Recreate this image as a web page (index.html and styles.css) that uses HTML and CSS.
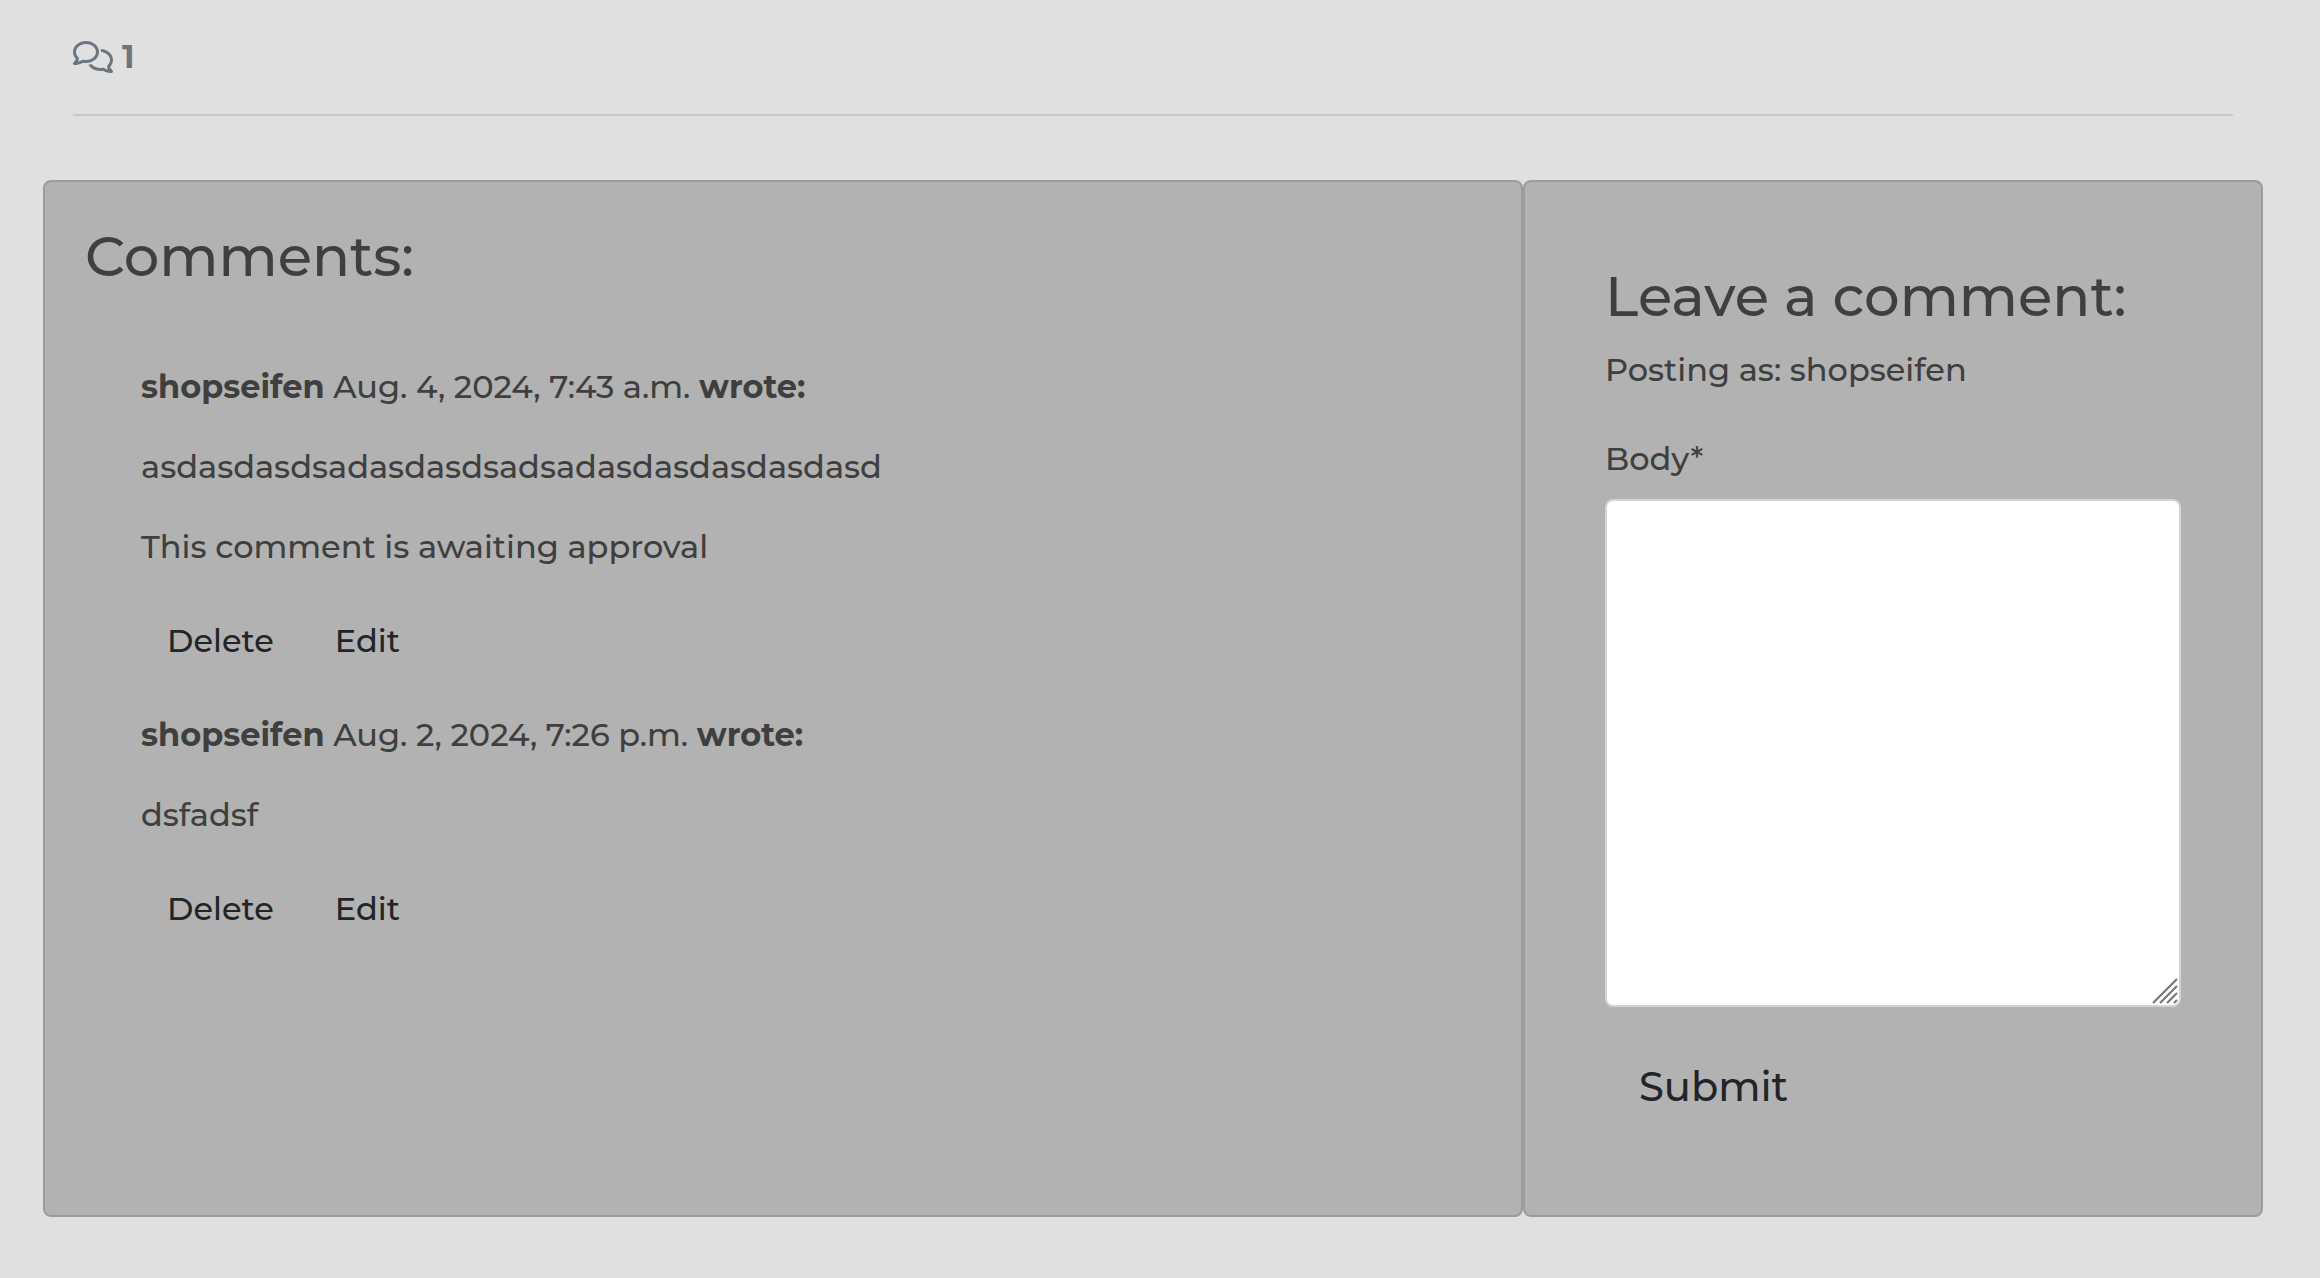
FILE: index.html
```html
<!DOCTYPE html>
<html lang="en">
<head>
  <meta charset="utf-8">
  <meta name="viewport" content="width=device-width, initial-scale=1">
  <title>Comments</title>
  <link rel="stylesheet" href="styles.css">
</head>
<body>
  <main class="page">
    <div class="comment-count">
      <svg class="count-icon" viewBox="0 0 640 512" fill="currentColor" aria-hidden="true"><path d="M88.200 309.100c9.800-18.300 6.800-40.800-7.500-55.800C59.400 230.900 48 204 48 176c0-63.500 63.800-128 160-128s160 64.500 160 128s-63.800 128-160 128c-13.100 0-25.800-1.300-37.800-3.600c-10.400-2-21.200-.6-30.700 4.200c-4.100 2.100-8.300 4.100-12.600 6c-16 7.200-32.900 13.500-49.900 18c2.800-4.600 5.400-9.100 7.900-13.600c1.100-1.900 2.200-3.900 3.200-5.900zM208 352c114.900 0 208-78.800 208-176S322.900 0 208 0S0 78.800 0 176c0 41.800 17.200 80.100 45.900 110.300c-.9 1.700-1.900 3.500-2.800 5.100c-10.300 18.400-22.300 36.500-36.600 52.100c-6.600 7-8.300 17.200-4.600 25.900C5.800 378.300 14.400 384 24 384c43 0 86.500-13.300 122.700-29.700c4.800-2.200 9.600-4.500 14.200-6.800c15.100 3 30.900 4.500 47.100 4.500zM432 480c16.200 0 31.900-1.600 47.100-4.500c4.600 2.300 9.400 4.600 14.200 6.800C529.500 498.700 573 512 616 512c9.600 0 18.200-5.700 22-14.500c3.800-8.800 2-19-4.600-25.900c-14.200-15.600-26.200-33.700-36.600-52.100c-.9-1.700-1.900-3.400-2.800-5.100C622.800 384.100 640 345.800 640 304c0-94.400-87.900-171.500-198.200-175.800c4.100 15.200 6.200 31.200 6.200 47.800l0 .6c87.200 6.700 144 67.500 144 127.400c0 28-11.400 54.900-32.700 77.200c-14.300 15-17.300 37.600-7.500 55.800c1.100 2 2.200 4 3.200 5.900c2.500 4.500 5.200 9 7.900 13.600c-17-4.500-33.900-10.700-49.900-18c-4.300-1.900-8.500-3.900-12.600-6c-9.500-4.800-20.300-6.200-30.700-4.200c-12.100 2.400-24.700 3.600-37.800 3.600c-61.700 0-110-26.500-136.800-62.300c-16 5.400-32.800 9.400-50 11.800C279 439.800 350 480 432 480z"/></svg>
      <strong>1</strong>
    </div>
    <hr class="divider">
    <div class="panels">
      <section class="panel comments">
        <h2 class="heading">Comments:</h2>
        <div class="comment-list">
          <article class="comment">
            <p><strong>shopseifen</strong> Aug. 4, 2024, 7:43 a.m. <strong>wrote:</strong></p>
            <p>asdasdasdsadasdasdsadsadasdasdasdasdasd</p>
            <p>This comment is awaiting approval</p>
            <div class="actions">
              <button class="btn" type="button">Delete</button>
              <button class="btn" type="button">Edit</button>
            </div>
          </article>
          <article class="comment">
            <p><strong>shopseifen</strong> Aug. 2, 2024, 7:26 p.m. <strong>wrote:</strong></p>
            <p>dsfadsf</p>
            <div class="actions">
              <button class="btn" type="button">Delete</button>
              <button class="btn" type="button">Edit</button>
            </div>
          </article>
        </div>
      </section>
      <section class="panel compose">
        <h2 class="heading">Leave a comment:</h2>
        <p>Posting as: shopseifen</p>
        <form class="form">
          <label for="body">Body*</label>
          <div class="field">
            <textarea class="body-input" id="body" name="body" required></textarea>
            <svg class="grip" viewBox="0 0 26 26" aria-hidden="true"><path d="M1 25 25 1M8 25 25 8M15 25l10-10M22 25l3-3"/></svg>
          </div>
          <button class="btn btn-large" type="submit">Submit</button>
        </form>
      </section>
    </div>
  </main>
</body>
</html>
```
FILE: styles.css
```css
* {
  box-sizing: border-box;
}

body {
  margin: 0;
  background: #e0e0e0;
  color: #3f3f3f;
  font-family: Montserrat, Inter, sans-serif;
  font-size: 32px;
  font-weight: 500;
  line-height: 48px;
}

h2,
p {
  margin: 0;
}

strong {
  font-weight: 700;
}

.page {
  min-height: 100vh;
  padding: 33px 57px 60px 43px;
}

.comment-count {
  display: flex;
  align-items: center;
  gap: 9px;
  margin: 0 30px;
  color: #6c757d;
}

.count-icon {
  width: 40px;
  height: 32px;
}

.divider {
  height: 2px;
  margin: 33px 30px 64px;
  border: 0;
  background: #c8c8c8;
}

.panels {
  display: grid;
  grid-template-columns: 2fr 1fr;
}

.panel {
  min-width: 0;
  border: 2px solid #9c9c9c;
  border-radius: 8px;
  background: #b2b2b2;
}

.heading {
  font-size: 56px;
  font-weight: 500;
  line-height: 68px;
}

.comments {
  padding: 40px;
}

.comment-list {
  padding: 73px 56px 0;
}

.comment p {
  margin-bottom: 32px;
}

.actions {
  display: flex;
  gap: 9px;
  margin-bottom: 32px;
}

.btn {
  padding: 12px 24px;
  border: 2px solid transparent;
  border-radius: 8px;
  background: transparent;
  color: #212529;
  font: inherit;
  cursor: pointer;
}

.compose {
  padding: 80px;
}

.compose .heading {
  margin-bottom: 16px;
}

.form {
  margin-top: 41px;
}

.form label {
  display: block;
  margin-bottom: 16px;
}

.field {
  position: relative;
  margin-bottom: 32px;
}

.body-input {
  display: block;
  width: 100%;
  height: 508px;
  padding: 12px 24px;
  border: 2px solid #ced4da;
  border-radius: 8px;
  background: #fff;
  color: #212529;
  font: inherit;
  resize: none;
}

.grip {
  position: absolute;
  right: 3px;
  bottom: 3px;
  width: 26px;
  height: 26px;
  fill: none;
  stroke: #757575;
  stroke-width: 2;
  pointer-events: none;
}

.btn-large {
  padding: 16px 32px;
  font-size: 40px;
  line-height: 60px;
}
```
